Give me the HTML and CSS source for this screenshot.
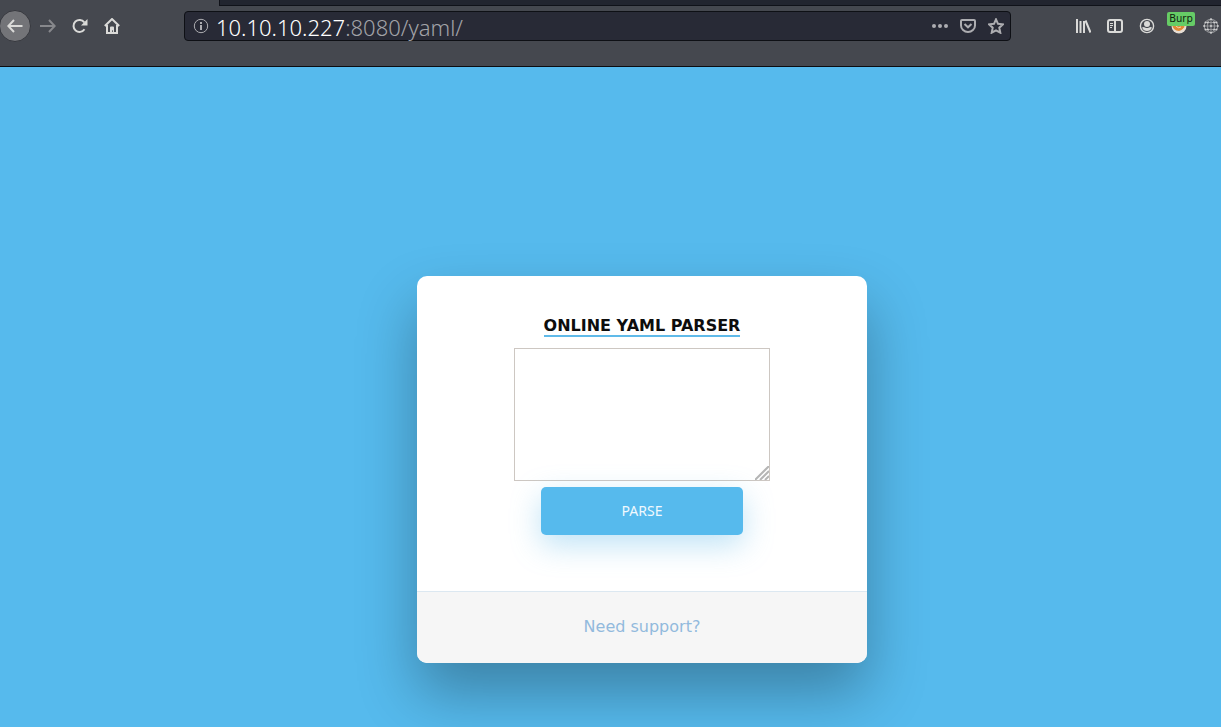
FILE: index.html
```html
<!DOCTYPE html>
<html lang="en">
<head>
<meta charset="utf-8">
<title>Online YAML Parser</title>
<link rel="stylesheet" href="styles.css">
</head>
<body>
<header class="browser">
  <div class="tabstrip"><div class="tab-active"></div><div class="tab-rest"></div></div>
  <nav class="toolbar" aria-label="Browser toolbar">
    <div class="nav-buttons">
      <button class="tool back" aria-label="Back"><svg width="16" height="16" viewBox="0 0 16 16"><path d="M15.500 8H1.500M7 2L1.300 8L7 14"/></svg></button>
      <button class="tool dim" aria-label="Forward"><svg width="16" height="16" viewBox="0 0 16 16"><path d="M0 8h14.500M9 2l5.700 6L9 14"/></svg></button>
      <button class="tool" aria-label="Reload"><svg width="16" height="16" viewBox="0 0 16 16"><path d="M12.500 11.300A6 6 0 1 1 12.300 4.300"/><path class="solid" d="M15.500 1v6.500H9z"/></svg></button>
      <button class="tool" aria-label="Home"><svg width="16" height="16" viewBox="0 0 16 16"><path d="M.8 8L8 1l7.200 7M3 7v8h10V7"/><path class="solid" d="M6 15V9.500Q6 8.500 7 8.500h2q1 0 1 1V15H8.800v-2.800H8V15z"/></svg></button>
    </div>
    <div class="urlbar">
      <svg class="info" width="16" height="16" viewBox="0 0 16 16"><circle cx="8" cy="8" r="6.700"/><path class="info-mark" d="M8 7v5M8 4v2"/></svg>
      <div class="url"><span class="host">10.10.10.227</span>:8080/yaml/</div>
      <button class="url-action" aria-label="Page actions"><svg width="16" height="16" viewBox="0 0 16 16"><g class="solid"><circle cx="2" cy="8" r="2"/><circle cx="8" cy="8" r="2"/><circle cx="14" cy="8" r="2"/></g></svg></button>
      <button class="url-action" aria-label="Save to Pocket"><svg width="16" height="16" viewBox="0 0 16 16"><path d="M2 2h12q1 0 1 1v4.500a7 6.500 0 0 1-14 0V3q0-1 1-1zM4.500 6L8 9.300L11.500 6"/></svg></button>
      <button class="url-action" aria-label="Bookmark this page"><svg width="16" height="16" viewBox="0 0 16 16"><path d="M8 1.300l2 4.500 5 .5-3.700 3.400 1 5L8 12.300l-4.300 2.400 1-5L1 6.300l5-.5z"/></svg></button>
    </div>
    <div class="extensions">
      <button class="tool" aria-label="Library"><svg width="16" height="16" viewBox="0 0 16 16"><path d="M2 1v14M5.500 3v12M9 3v12M10.500 2.500l5 12"/></svg></button>
      <button class="tool" aria-label="Sidebars"><svg width="16" height="16" viewBox="0 0 16 16"><rect x="1" y="2" width="14" height="12" rx="2"/><path d="M8 2v12"/><path class="thin" d="M3 5.500h3M3 7.500h3M3 9.500h2"/></svg></button>
      <button class="tool" aria-label="Account"><svg width="16" height="16" viewBox="0 0 16 16"><circle class="ring" cx="8" cy="8" r="6.600"/><circle class="solid" cx="8" cy="6" r="3"/><path class="solid" d="M3 9.500q1.500-.8 3 0 2 1 4 0 1.500-.8 3 0Q11.500 13 8 13T3 9.500z"/></svg></button>
      <button class="tool proxy" aria-label="Proxy: Burp"><svg width="16" height="16" viewBox="0 0 16 16"><circle class="globe" cx="8" cy="8" r="7.500"/><path class="fox" d="M1 6q1 7 7 7 4-1 6-5l-2-3z"/><path class="tail" d="M5 8q2 3 5 1M11 12q3-2 3.500-5"/></svg><span class="badge">Burp</span></button>
      <button class="tool web" aria-label="Web tools"><svg width="16" height="16" viewBox="0 0 16 16"><circle cx="8" cy="8" r="6.800"/><ellipse cx="8" cy="8" rx="3.500" ry="6.800"/><path d="M8 1v14M1 8h14M2 4.500h12M2 11.500h12"/><path class="nodes" d="M8 1.200h0M8 8h0M8 14.800h0M2.500 4.500h0M13.500 4.500h0M2.500 11.500h0M13.500 11.500h0M1.200 8h0M14.800 8h0M4.800 4.500h0M11.200 4.500h0M4.800 11.500h0M11.200 11.500h0"/></svg></button>
    </div>
  </nav>
</header>
<main class="page">
  <section class="card">
    <form class="parser">
      <h2 class="title"><label for="data">Online YAML Parser</label></h2>
      <div class="field">
        <textarea class="input" id="data" name="data"></textarea>
        <svg class="grip" width="14" height="14" viewBox="0 0 14 14"><path d="M0 14L14 0M5 14l9-9M10 14l4-4"/></svg>
      </div>
      <button class="submit" type="button">Parse</button>
    </form>
    <footer class="card-footer"><a class="support" href="#">Need support?</a></footer>
  </section>
</main>
</body>
</html>
```
FILE: styles.css
```css
* { box-sizing: border-box; }
html { height: 100%; }
body {
  margin: 0;
  min-height: 100%;
  display: flex;
  flex-direction: column;
  overflow-x: hidden;
  background: #56baed;
  font-family: "DejaVu Sans", sans-serif;
  font-size: 16px;
}
button { margin: 0; padding: 0; border: 0; background: none; font: inherit; }
svg { display: block; fill: none; stroke: currentColor; stroke-width: 2; }
.solid { fill: currentColor; stroke: none; }
.thin { stroke-width: 1; }
.ring { stroke-width: 1.4; }

.browser {
  background: #45484f;
  border-bottom: 1px solid #0c0c10;
  color: #dadad8;
}
.tabstrip { display: flex; height: 6px; }
.tab-active { width: 219px; }
.tab-rest {
  flex: 1;
  background: #22252f;
  border-left: 1px solid #101219;
  border-bottom: 1px solid #101219;
}
.toolbar {
  display: flex;
  align-items: center;
  padding: 4px 0 24px;
}
.nav-buttons { display: flex; width: 184px; }
.tool {
  flex: none;
  display: flex;
  align-items: center;
  justify-content: center;
  width: 32px;
  height: 32px;
  color: inherit;
}
.back {
  margin: 0 1px 0 -1px;
  background: #737478;
  border: 1px solid #36383e;
  border-radius: 50%;
}
.dim { color: #87888c; }
.urlbar {
  flex: 1;
  display: flex;
  align-items: center;
  gap: 12px;
  height: 30px;
  padding: 0 6px 0 8px;
  background: #282a36;
  border: 1px solid #0e1015;
  border-radius: 4px;
  color: #adadb1;
}
.info { stroke-width: 1; margin-right: -5px; }
.info-mark { stroke-width: 2; }
.url {
  flex: 1;
  padding-top: 2px;
  font: 300 22px/26px "Noto Sans", sans-serif;
  color: #a2a3a8;
  white-space: nowrap;
}
.host { color: #fff; }
.url-action { color: inherit; }
.extensions { display: flex; width: 210px; padding-left: 56px; }
.proxy { position: relative; }
.badge {
  position: absolute;
  top: 2px;
  left: 4px;
  width: 28px;
  background: #66cc66;
  border-radius: 2px;
  color: #10240f;
  font-size: 10px;
  line-height: 14px;
  text-align: center;
}
.globe { fill: #e8ded4; stroke: none; }
.fox { fill: #e08a35; stroke: none; }
.tail { stroke: #f5d3ac; stroke-width: 1; }
.web { color: #96989b; }
.web svg { stroke-width: 1; }
.nodes { stroke: #cfd0d1; stroke-width: 2; stroke-linecap: round; }

.page {
  flex: 1;
  display: flex;
  justify-content: center;
  align-items: flex-start;
  padding: 209px 0 20px 63px;
}
.card {
  width: 100%;
  max-width: 450px;
  overflow: hidden;
  background: #fff;
  border-radius: 10px;
  box-shadow: 0 30px 60px 0 rgba(0, 0, 0, 0.3);
  text-align: center;
}
.parser {
  display: flex;
  flex-direction: column;
  align-items: center;
  padding: 40px 0 56px;
}
.title {
  margin: 0 0 11px;
  border-bottom: 2px solid #5fbae9;
  color: #0d0d0d;
  font-size: 16px;
  line-height: 19px;
  font-weight: 700;
  text-transform: uppercase;
}
.field { position: relative; margin-bottom: 6px; }
.input {
  display: block;
  width: 256px;
  height: 133px;
  padding: 2px;
  border: 1px solid #cdc7c2;
  background: #fff;
  resize: none;
  outline: none;
}
.grip {
  position: absolute;
  right: 1px;
  bottom: 1px;
  color: #b5b5b5;
  pointer-events: none;
}
.submit {
  z-index: 1;
  padding: 14px 81px;
  background: #56baed;
  border-radius: 5px;
  box-shadow: 0 10px 30px 0 rgba(95, 186, 233, 0.4);
  color: #f0f9fe;
  font: 14px/20px "Noto Sans", sans-serif;
  text-transform: uppercase;
}
.card-footer {
  padding: 24px 25px 26px;
  background: #f6f6f6;
  border-top: 1px solid #dce8f1;
  line-height: 21px;
}
.support { color: #92badd; text-decoration: none; }
```
